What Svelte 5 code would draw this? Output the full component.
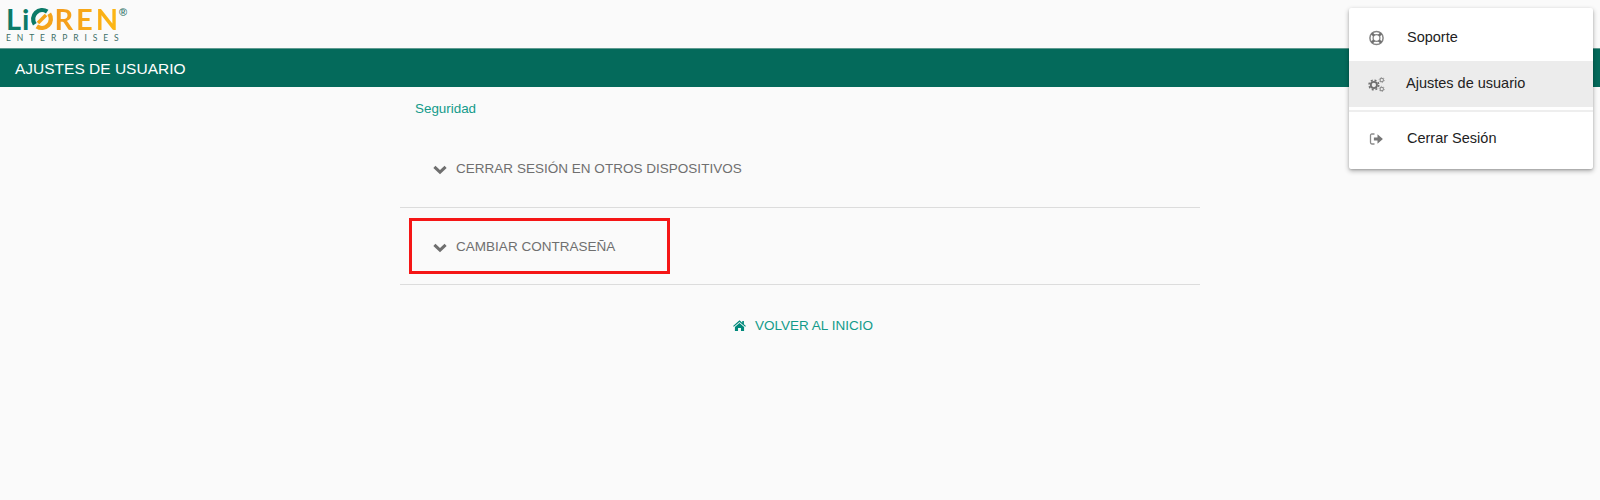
<script>
  // Ajustes de usuario: cabecera, menú de usuario abierto y secciones plegadas
  const secciones = ['CERRAR SESIÓN EN OTROS DISPOSITIVOS', 'CAMBIAR CONTRASEÑA'];
</script>

{#snippet chevron()}
  <svg class="chev" viewBox="0 0 14 10" width="14" height="10" aria-hidden="true">
    <path d="M1.4 1.8 L7 7.2 L12.6 1.8" fill="none" stroke="#6f6f6f" stroke-width="3" />
  </svg>
{/snippet}

<div class="page">
  <header class="top">
    <div class="logo">
      <div class="word">
        <span class="teal">Li</span><svg class="o" viewBox="0 0 24 24" width="24" height="24" aria-hidden="true">
          <path d="M17.2 4.6 A9 9 0 0 0 4.8 17.2" fill="none" stroke="#0b7a68" stroke-width="4.4" />
          <path d="M6.8 19.4 A9 9 0 0 0 19.2 6.8" fill="none" stroke="#f5a31a" stroke-width="4.4" />
          <path d="M8 16 L16 8" stroke="#f5a31a" stroke-width="3.6" />
        </svg><span class="orange">REN</span><span class="reg">®</span>
      </div>
      <div class="sub">ENTERPRISES</div>
    </div>
  </header>

  <div class="bar">AJUSTES DE USUARIO</div>

  <main class="content">
    <div class="tab">Seguridad</div>
    <div class="row first">
      {@render chevron()}
      <span>{secciones[0]}</span>
    </div>
    <div class="row second">
      <div class="mark">
        {@render chevron()}
        <span>{secciones[1]}</span>
      </div>
    </div>
    <div class="back">
      <svg viewBox="0 0 14 12" width="13" height="11" aria-hidden="true">
        <path d="M7 0.4 L10 3 V1.2 H11.8 V4.6 L14 6.5 L13.2 7.4 L7 2.2 L0.8 7.4 L0 6.5 Z M7 3.4 L12 7.6 V12 H8.6 V8.6 H5.4 V12 H2 V7.6 Z" fill="#00897b" />
      </svg>
      <span>VOLVER AL INICIO</span>
    </div>
  </main>

  <nav class="menu">
    <div class="item">
      <svg class="ring" viewBox="0 0 16 16" width="16" height="16" aria-hidden="true">
        <circle cx="8" cy="8" r="6.6" fill="none" stroke="#858585" stroke-width="1.5" />
        <circle cx="8" cy="8" r="3.4" fill="none" stroke="#858585" stroke-width="1.3" />
        <path d="M3.3 3.3 L5.6 5.6 M12.7 3.3 L10.4 5.6 M3.3 12.7 L5.6 10.4 M12.7 12.7 L10.4 10.4" stroke="#6f6f6f" stroke-width="2.6" />
      </svg>
      <span>Soporte</span>
    </div>
    <div class="item active">
      <svg viewBox="0 0 18 16" width="17" height="15" aria-hidden="true">
        <circle cx="6.2" cy="8.5" r="3.3" fill="none" stroke="#6f6f6f" stroke-width="2" />
        <circle cx="6.2" cy="8.5" r="5.2" fill="none" stroke="#6f6f6f" stroke-width="1.6" stroke-dasharray="2.1 2" />
        <circle cx="14.6" cy="3.2" r="1.8" fill="none" stroke="#858585" stroke-width="1.1" />
        <circle cx="14.6" cy="3.2" r="2.8" fill="none" stroke="#858585" stroke-width="0.7" stroke-dasharray="1.3 1.63" />
        <circle cx="14.6" cy="12.8" r="1.8" fill="none" stroke="#858585" stroke-width="1.1" />
        <circle cx="14.6" cy="12.8" r="2.8" fill="none" stroke="#858585" stroke-width="0.7" stroke-dasharray="1.3 1.63" />
      </svg>
      <span class="tight">Ajustes de usuario</span>
    </div>
    <hr />
    <div class="item last">
      <svg class="out" viewBox="0 0 14 12" width="14" height="12" aria-hidden="true">
        <path d="M5 1 H2.4 Q1 1 1 2.4 V9.6 Q1 11 2.4 11 H5" fill="none" stroke="#8a8a8a" stroke-width="1.3" />
        <path d="M4.4 4.4 H8 V1.2 L13.4 6 L8 10.8 V7.6 H4.4 Z" fill="#777" />
      </svg>
      <span>Cerrar Sesión</span>
    </div>
  </nav>
</div>

<style>
  :global(body) { margin: 0; background: #fafafa; }
  .page { position: relative; height: 500px; overflow: hidden; font-family: "Liberation Sans", Arial, sans-serif; }

  .top { height: 48px; box-sizing: border-box; padding: 6px 0 0 6px; }
  .logo { width: 125px; }
  .word { display: flex; align-items: center; height: 26px; font-family: Lato, sans-serif; font-weight: 700; font-size: 29px; line-height: 26px; letter-spacing: 1px; }
  .teal { color: #0b7a68; }
  .orange { background: linear-gradient(90deg, #f39a1c, #fdb913); -webkit-background-clip: text; background-clip: text; color: transparent; letter-spacing: 3px; }
  .o { flex: none; }
  .reg { font-family: "Liberation Sans", sans-serif; font-size: 11px; line-height: 10px; font-weight: 700; color: #3f7d72; align-self: flex-start; margin: 1px 0 0 -2px; letter-spacing: 0; }
  .sub { font-family: Lato, sans-serif; font-size: 8.5px; line-height: 9px; margin-top: 2px; letter-spacing: 5.9px; color: #3d6f67; white-space: nowrap; }

  .bar { height: 39px; background: #046a5b; color: #fff; font-size: 15.5px; line-height: 40px; padding-left: 15px; border-top: 1px solid #5f9a90; box-sizing: border-box; }

  .content { width: 800px; margin: 0 auto; color: #6f6f6f; font-size: 13.5px; }
  .tab { padding: 14px 0 0 15px; height: 21px; color: #139a8a; font-size: 13.4px; line-height: 15px; }
  .row { display: flex; align-items: center; border-bottom: 1px solid #dcdcdc; box-sizing: border-box; }
  .row span { letter-spacing: 0.02px; }
  .first { height: 86px; padding: 8px 0 0 33px; gap: 9px; }
  .second { height: 77px; padding: 10px 0 0 9px; align-items: flex-start; }
  .mark { width: 261px; height: 56px; box-sizing: border-box; border: 3px solid #f51616; display: flex; align-items: center; padding-left: 21px; gap: 9px; }
  .chev { flex: none; margin-top: 3px; }

  .back { display: flex; justify-content: center; align-items: center; gap: 9px; margin-top: 32px; padding-left: 6px; height: 16px; color: #139a8a; font-size: 13.5px; }

  .menu { position: absolute; top: 8px; left: 1349px; width: 244px; height: 161px; box-sizing: border-box; padding-top: 7px; background: #fff; border-radius: 2px; box-shadow: 0 2px 5px rgba(0, 0, 0, .3), 0 1px 2px rgba(0, 0, 0, .15); color: #222; font-size: 14.5px; }
  .item { display: flex; align-items: center; height: 46px; padding-left: 19px; }
  .item span { margin-top: -2px; }
  .item span.tight { margin-left: -1px; }
  .item svg { width: 17px; flex: none; margin-right: 22px; }
  .item svg.ring { margin-top: -1px; }
  .item svg.out { margin-top: 1px; }
  .active { background: #ececec; }
  hr { margin: 3px 0 0; border: 0; border-top: 2px solid #eee; }
  .last { margin-top: 3px; }
  .last span { margin-top: 0; }
</style>
